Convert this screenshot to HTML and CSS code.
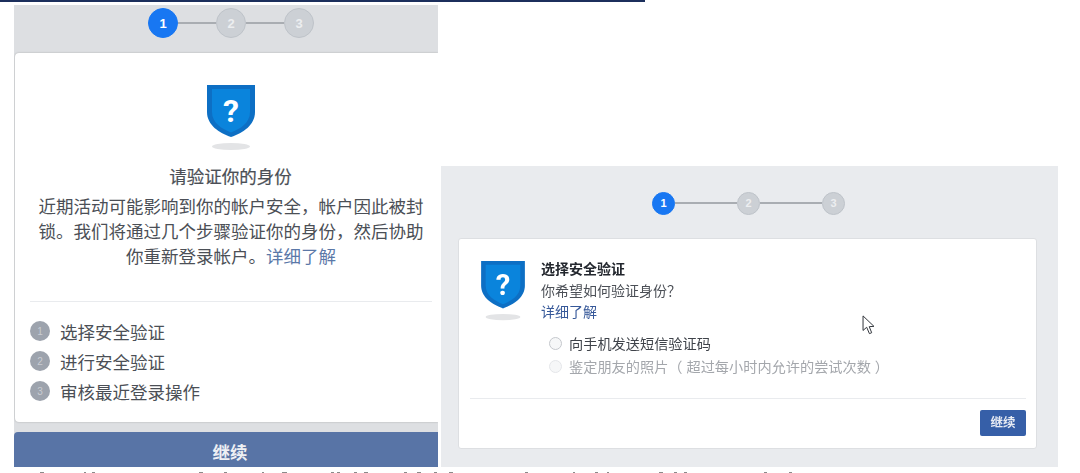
FILE: index.html
```html
<!DOCTYPE html>
<html lang="zh-CN">
<head>
    <meta charset="UTF-8">
    <title>请验证你的身份</title>
    <link rel="stylesheet" href="styles.css">
</head>
<body>
    <div class="top-rule"></div>
    <div class="shots">
        <div class="phone">
            <div class="steps phone-steps">
                <span class="dot active">1</span><span class="link"></span>
                <span class="dot">2</span><span class="link"></span>
                <span class="dot">3</span>
            </div>
            <div class="phone-card">
                <svg class="shield phone-shield" viewBox="0 0 48 68">
                    <path d="M0 0H48V27C48 40 36 48 24 52C12 48 0 40 0 27Z" fill="#0d6fc4"/>
                    <path d="M5 4H43V27C43 38 33 44 24 47.500C15 44 5 38 5 27Z" fill="#0a84dc"/>
                    <ellipse cx="24" cy="61.500" rx="19" ry="3.500" fill="#e3e4e6"/>
                    <text x="24" y="37" text-anchor="middle" class="shield-mark">?</text>
                </svg>
                <h2 class="phone-title">请验证你的身份</h2>
                <p class="phone-text">近期活动可能影响到你的帐户安全，帐户因此被封锁。我们将通过几个步骤验证你的身份，然后协助你重新登录帐户。<a class="more">详细了解</a></p>
                <div class="phone-rule"></div>
                <ul class="phone-list">
                    <li><span class="num">1</span>选择安全验证</li>
                    <li><span class="num">2</span>进行安全验证</li>
                    <li><span class="num">3</span>审核最近登录操作</li>
                </ul>
            </div>
            <div class="phone-btn">继续</div>
        </div>

        <div class="desk">
            <div class="steps desk-steps">
                <span class="dot active">1</span><span class="link"></span>
                <span class="dot">2</span><span class="link"></span>
                <span class="dot">3</span>
            </div>
            <div class="desk-card">
                <div class="desk-head">
                    <svg class="shield desk-shield" viewBox="0 0 48 68">
                        <path d="M0 0H48V27C48 40 36 48 24 52C12 48 0 40 0 27Z" fill="#0d6fc4"/>
                        <path d="M5 4H43V27C43 38 33 44 24 47.500C15 44 5 38 5 27Z" fill="#0a84dc"/>
                        <ellipse cx="24" cy="61.500" rx="19" ry="3.500" fill="#e3e4e6"/>
                        <text x="24" y="37" text-anchor="middle" class="shield-mark">?</text>
                    </svg>
                    <div>
                        <div class="desk-title">选择安全验证</div>
                        <div class="desk-ask">你希望如何验证身份？</div>
                        <a class="more">详细了解</a>
                    </div>
                </div>
                <div class="options">
                    <div class="option"><span class="radio"></span>向手机发送短信验证码</div>
                    <div class="option off"><span class="radio"></span>鉴定朋友的照片（ 超过每小时内允许的尝试次数 ）</div>
                </div>
                <div class="desk-foot">
                    <span class="desk-btn">继续</span>
                </div>
                <svg class="cursor" viewBox="0 0 14 22">
                    <path d="M1 1V17L5 13.500L8 20.500L10.500 19.500L7.800 12.800L13 12.500Z" fill="#fff" stroke="#33373d" stroke-width="1.100"/>
                </svg>
            </div>
        </div>
    </div>
    <!-- only the top pixel of a cropped line of text shows at the bottom edge, too little to read -->
    <svg class="cut-marks" viewBox="0 0 1080 6">
        <path d="M40 5.500h4M84 5.500h2M92 5.500h3M199 5.500h4M224 5.500h3M262 5.500h2M282 5.500h5M331 5.500h3M337 5.500h3M354 5.500h3M364 5.500h4M404 5.500h3M417 5.500h4M434 5.500h3M449 5.500h4M525 5.500h3M573 5.500h2M595 5.500h3M607 5.500h2M659 5.500h4M674 5.500h3M684 5.500h3M764 5.500h3M789 5.500h3"/>
    </svg>
</body>
</html>
```

FILE: styles.css
```css
html, body {
    margin: 0;
    padding: 0;
    height: 473px;
    overflow: hidden;
    background: white;
}

body {
    font-family: "Liberation Sans", "Noto Sans CJK SC", sans-serif;
    color: #4b4f56;
}

.top-rule {
    width: 645px;
    height: 2px;
    background: #1c2f5c;
}

/* both shots are soft, upscaled captures */
.shots {
    display: flex;
    align-items: flex-start;
    margin-top: 3px;
    margin-left: 14px;
    filter: blur(0.45px);
}

/* steps */
.steps {
    display: flex;
    align-items: center;
    justify-content: center;
    box-sizing: border-box;
}

.dot {
    box-sizing: border-box;
    display: flex;
    align-items: center;
    justify-content: center;
    border-radius: 50%;
    background: #ccd0d5;
    border: 1px solid #bec3c9;
    color: #eceef0;
    font-weight: bold;
}

.dot.active {
    background: #1877f2;
    border-color: #1877f2;
    color: white;
}

.link {
    height: 2px;
    background: #a9adb2;
}

/* left shot */
.phone {
    flex: none;
    width: 424px;
    height: 462px;
    background: #dddfe2;
    overflow: hidden;
}

.phone-steps {
    height: 48px;
    padding: 0 0 12px 10px;
}

.phone-steps .dot {
    width: 30px;
    height: 30px;
    font-size: 13px;
}

.phone-steps .link {
    width: 38px;
}

.phone-card {
    box-sizing: border-box;
    height: 369px;
    margin-left: 1px;
    padding: 32px 0 0 8px;
    background: white;
    border-radius: 4px 0 0 4px;
    box-shadow: 0 0 2px rgba(0,0,0,0.25);
    text-align: center;
}

.shield {
    display: block;
}

.shield-mark {
    font-family: Roboto, sans-serif;
    font-size: 32px;
    font-weight: bold;
    fill: white;
}

.phone-shield {
    width: 48px;
    height: 68px;
    margin: 0 auto;
}

.phone-title {
    margin: 12px 0 0;
    font-size: 17.500px;
    font-weight: normal;
    line-height: 24px;
    -webkit-text-stroke: 0.2px #4b4f56;
}

.phone-text {
    width: 388px;
    margin: 6px 0 0 14px;
    font-size: 17.500px;
    line-height: 25px;
}

.more {
    color: #5b78a8;
}

.phone-rule {
    height: 1px;
    margin: 31px 6px 0 7px;
    background: #e9ebee;
}

.phone-list {
    list-style: none;
    margin: 14px 0 0 7px;
    padding: 0;
    text-align: left;
    font-size: 17.500px;
}

.phone-list li {
    display: flex;
    align-items: center;
    height: 30px;
}

.num {
    display: flex;
    align-items: center;
    justify-content: center;
    width: 20px;
    height: 20px;
    margin-right: 10px;
    border-radius: 50%;
    background: #9da3ad;
    color: #c9ccd2;
    font-size: 10px;
}

.phone-btn {
    height: 35px;
    margin-top: 10px;
    border-radius: 4px 0 0 0;
    background: #5874a6;
    color: #eef0f4;
    font-size: 17.500px;
    font-weight: bold;
    line-height: 42px;
    text-align: center;
    padding-left: 8px;
    overflow: hidden;
}

/* right shot */
.desk {
    flex: none;
    width: 617px;
    height: 301px;
    margin: 161px 0 0 3px;
    background: #e9ebee;
    padding: 0 21px 0 17px;
    box-sizing: border-box;
}

.desk-steps {
    height: 72px;
    padding: 2px 0 0 2px;
}

.desk-steps .dot {
    width: 23px;
    height: 23px;
    font-size: 11px;
}

.desk-steps .link {
    width: 62px;
}

.desk-card {
    box-sizing: border-box;
    position: relative;
    height: 211px;
    padding: 20px 10px 0 11px;
    background: white;
    border: 1px solid #dddfe2;
    border-radius: 3px;
}

.desk-head {
    display: flex;
    gap: 16px;
    font-size: 14px;
    line-height: 21.500px;
}

.desk-head .more {
    color: #365899;
}

.desk-shield {
    width: 44px;
    height: 62px;
    margin: 2px 0 0 11px;
}

.desk-title {
    font-weight: bold;
    color: #23272e;
}

.desk-ask {
    color: #4b4f56;
}

.options {
    margin: 8px 0 0 79px;
    font-size: 14.200px;
}

.option {
    display: flex;
    align-items: center;
    height: 23px;
    color: #3f434a;
}

.option.off {
    color: #a4a7ac;
}

.radio {
    box-sizing: border-box;
    width: 13px;
    height: 13px;
    margin-right: 7px;
    border-radius: 50%;
    border: 1px solid #c4c7cc;
    background: #f6f7f8;
}

.option.off .radio {
    border-color: #e4e6e9;
}

.desk-foot {
    display: flex;
    justify-content: flex-end;
    margin-top: 20px;
    padding-top: 11px;
    border-top: 1px solid #e9ebee;
}

.desk-btn {
    display: block;
    width: 46px;
    height: 26px;
    border-radius: 2px;
    background: #365fa8;
    color: #e8ecf4;
    font-size: 12.500px;
    font-weight: bold;
    line-height: 26px;
    text-align: center;
}

/* mouse pointer sitting over the card */
.cursor {
    position: absolute;
    left: 403px;
    top: 76px;
    width: 13px;
    height: 20px;
}

.cut-marks {
    display: block;
    width: 1080px;
    height: 6px;
    stroke: #8a8a8a;
    stroke-width: 1;
}
```
